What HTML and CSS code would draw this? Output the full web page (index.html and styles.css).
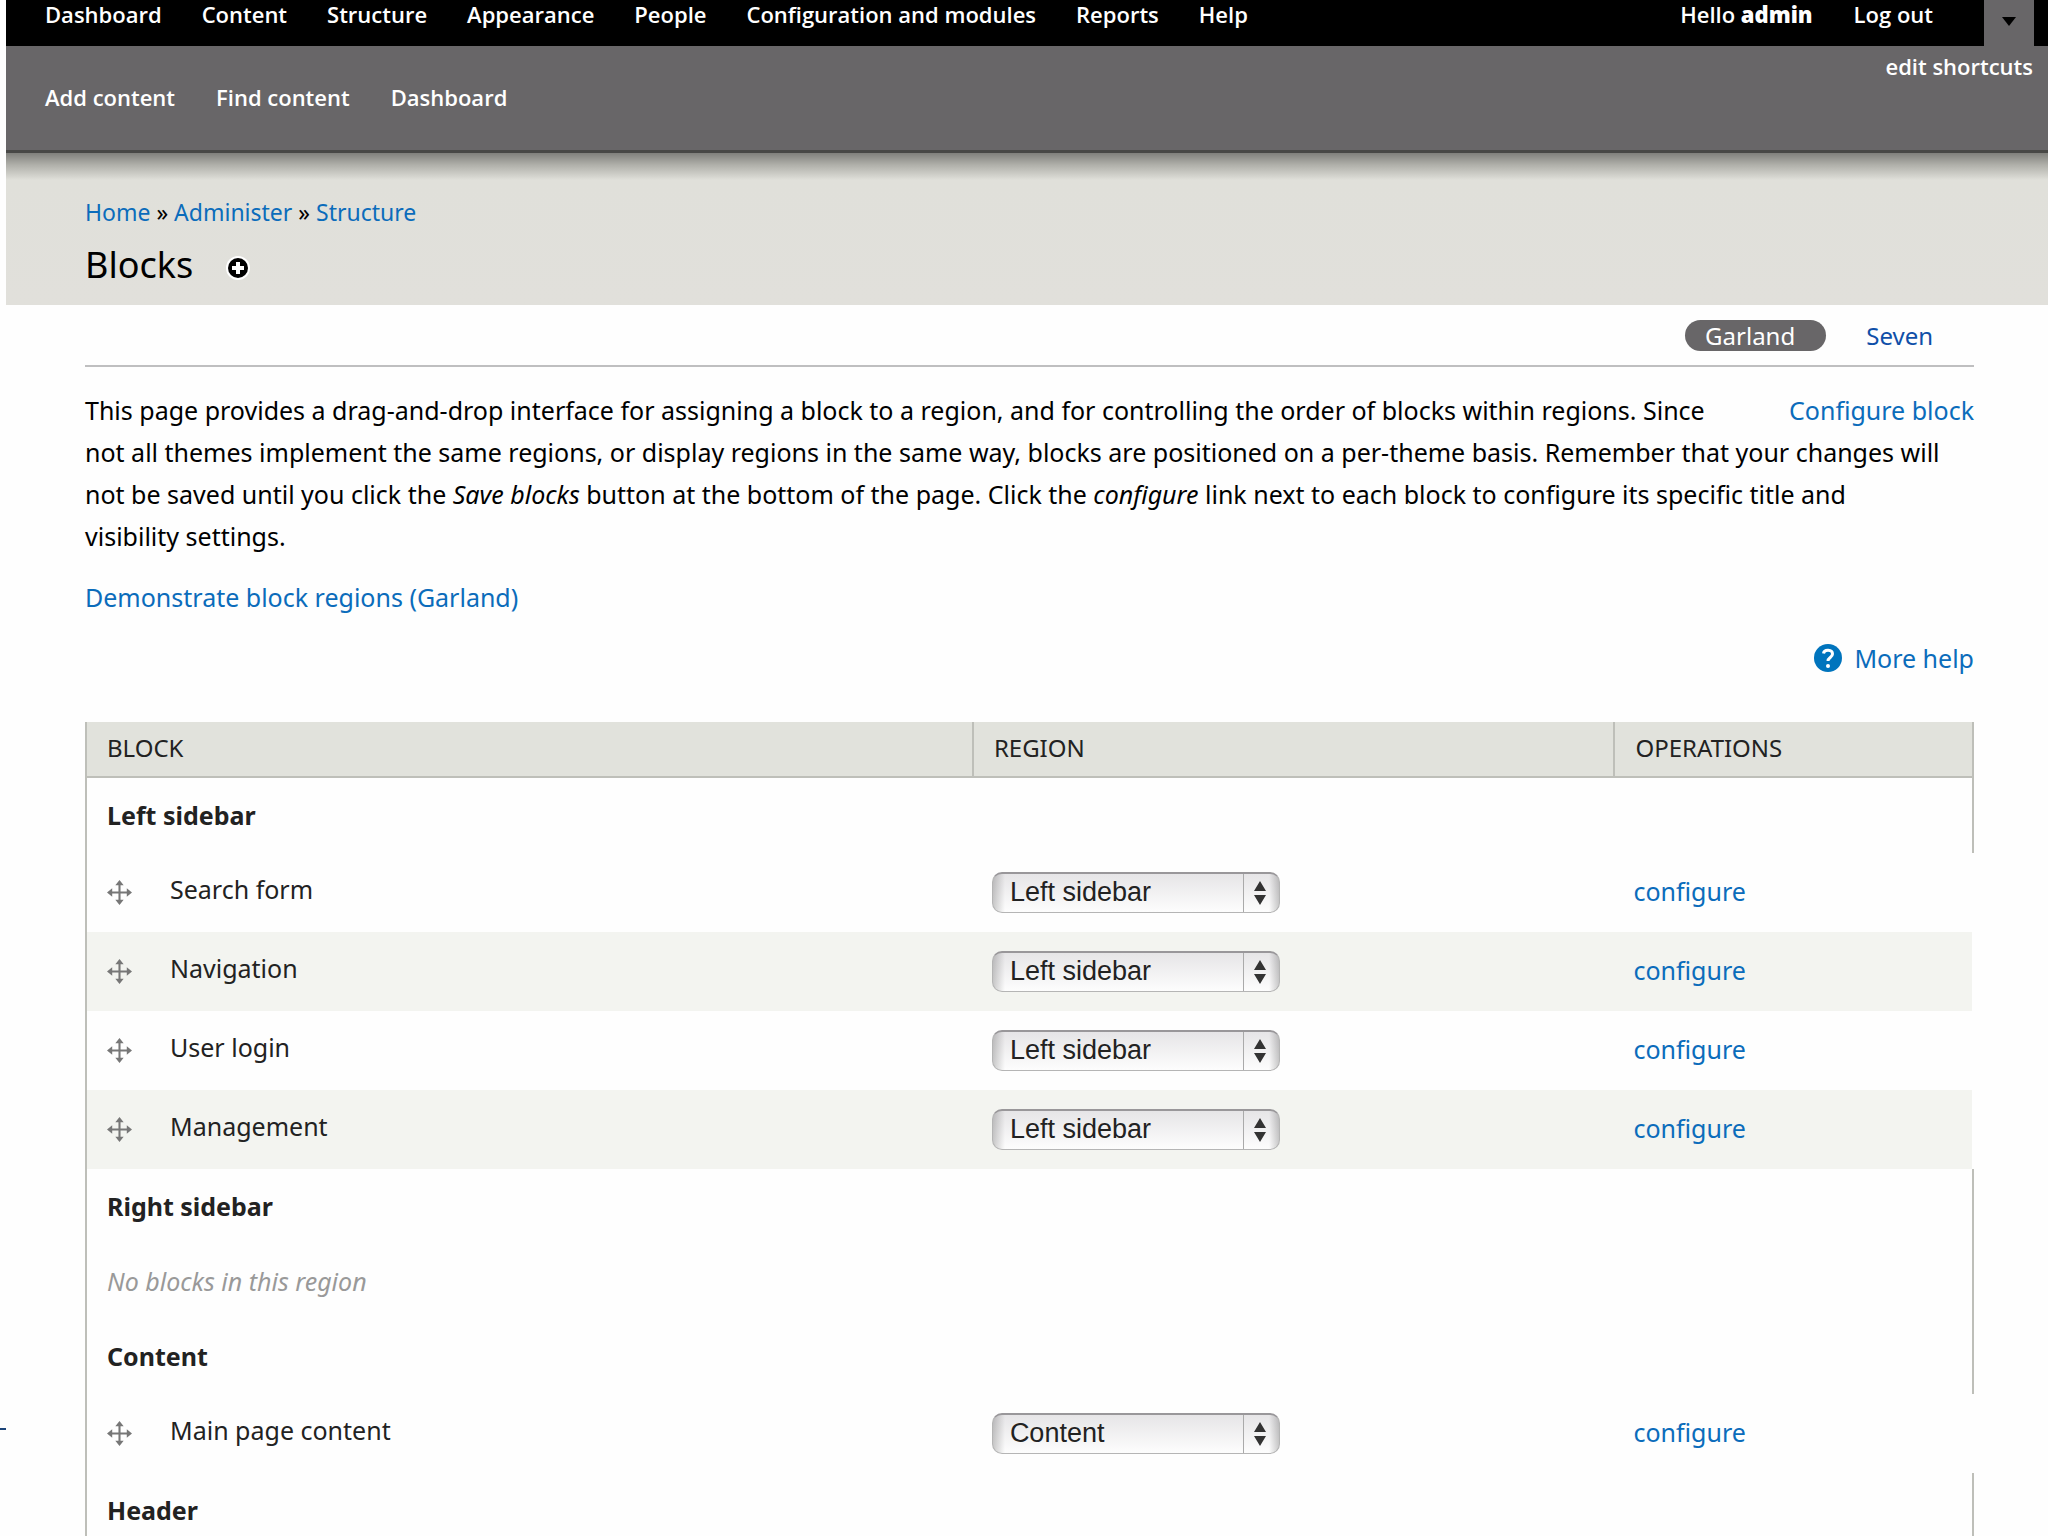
FILE: index.html
```html
<!doctype html>
<html lang="en">
  <head>
    <meta charset="UTF-8" />
    <meta name="viewport" content="width=device-width, initial-scale=1.0" />
    <title>Blocks</title>
    <link rel="stylesheet" href="styles.css">
  </head>
  <body>
    <!-- Toolbar -->
    <div class="toolbar">
      <div class="toolbar-menu">
        <nav class="menu">
          <a href="#">Dashboard</a>
          <a href="#">Content</a>
          <a href="#">Structure</a>
          <a href="#">Appearance</a>
          <a href="#">People</a>
          <a href="#">Configuration and modules</a>
          <a href="#">Reports</a>
          <a href="#">Help</a>
        </nav>
        <div class="menu user-menu">
          <a href="#">Hello <strong>admin</strong></a>
          <a href="#">Log out</a>
        </div>
        <button class="toggle" type="button" aria-label="Toggle shortcuts">
          <svg width="14" height="9" viewBox="0 0 14 9"><path d="M0 0h14L7 9z" /></svg>
        </button>
      </div>
      <div class="toolbar-drawer">
        <nav class="menu shortcuts">
          <a href="#">Add content</a>
          <a href="#">Find content</a>
          <a href="#">Dashboard</a>
        </nav>
        <a class="edit-shortcuts" href="#">edit shortcuts</a>
      </div>
    </div>

    <!-- Page title -->
    <header class="branding">
      <div class="breadcrumb">
        <a href="#">Home</a> » <a href="#">Administer</a> » <a href="#">Structure</a>
      </div>
      <div class="title-row">
        <h1>Blocks</h1>
        <button class="add-shortcut" type="button" aria-label="Add to shortcuts">
          <svg width="26" height="26" viewBox="0 0 26 26">
            <circle cx="13" cy="13" r="12" fill="#fff" />
            <circle cx="13" cy="13" r="10" fill="#000" />
            <path d="M13 7v12M7 13h12" stroke="#fff" stroke-width="4" />
          </svg>
        </button>
      </div>
    </header>

    <main class="page">
      <nav class="tabs">
        <a class="active" href="#">Garland</a>
        <a href="#">Seven</a>
      </nav>

      <div class="help">
        <a class="configure-block" href="#">Configure block</a>
        <p>
          This page provides a drag-and-drop interface for assigning a block to a region, and for controlling the order of blocks within regions. Since<br>
          not all themes implement the same regions, or display regions in the same way, blocks are positioned on a per-theme basis. Remember that your changes will<br>
          not be saved until you click the <em>Save blocks</em> button at the bottom of the page. Click the <em>configure</em> link next to each block to configure its specific title and<br>
          visibility settings.
        </p>
        <p><a href="#">Demonstrate block regions (Garland)</a></p>
        <a class="more-help" href="#">
          <svg width="28" height="28" viewBox="0 0 28 28">
            <circle cx="14" cy="14" r="14" fill="#0074bd" />
            <path d="M9.500 9.500C10 5 18.500 5 18.500 10c0 3.500-4.500 3.500-4.500 7" fill="none" stroke="#fff" stroke-width="3" />
            <circle cx="14" cy="22" r="2" fill="#fff" />
          </svg>
          More help
        </a>
      </div>

      <table class="blocks">
        <thead>
          <tr>
            <th class="col-block">Block</th>
            <th class="col-region">Region</th>
            <th>Operations</th>
          </tr>
        </thead>
        <tbody>
          <tr class="region">
            <td colspan="3">Left sidebar</td>
          </tr>
          <tr class="draggable">
            <td>
              <div class="block-name">
                <svg class="handle" viewBox="0 0 24 24"><path d="M12 3v18M3 12h18" /><path class="tip" d="M12 0l4 5H8zM12 24l4-5H8zM0 12l5-4v8zM24 12l-5-4v8z" /></svg>
                <label for="region-search">Search form</label>
              </div>
            </td>
            <td>
              <div class="select">
                <select id="region-search"><option>Left sidebar</option><option>Right sidebar</option><option>Content</option><option>Header</option></select>
                <svg viewBox="0 0 12 24"><path d="M6 0l6 10H0zM6 24l6-10H0z" /></svg>
              </div>
            </td>
            <td class="operations"><a href="#">configure</a></td>
          </tr>
          <tr class="draggable even">
            <td>
              <div class="block-name">
                <svg class="handle" viewBox="0 0 24 24"><path d="M12 3v18M3 12h18" /><path class="tip" d="M12 0l4 5H8zM12 24l4-5H8zM0 12l5-4v8zM24 12l-5-4v8z" /></svg>
                <label for="region-navigation">Navigation</label>
              </div>
            </td>
            <td>
              <div class="select">
                <select id="region-navigation"><option>Left sidebar</option><option>Right sidebar</option><option>Content</option><option>Header</option></select>
                <svg viewBox="0 0 12 24"><path d="M6 0l6 10H0zM6 24l6-10H0z" /></svg>
              </div>
            </td>
            <td class="operations"><a href="#">configure</a></td>
          </tr>
          <tr class="draggable">
            <td>
              <div class="block-name">
                <svg class="handle" viewBox="0 0 24 24"><path d="M12 3v18M3 12h18" /><path class="tip" d="M12 0l4 5H8zM12 24l4-5H8zM0 12l5-4v8zM24 12l-5-4v8z" /></svg>
                <label for="region-login">User login</label>
              </div>
            </td>
            <td>
              <div class="select">
                <select id="region-login"><option>Left sidebar</option><option>Right sidebar</option><option>Content</option><option>Header</option></select>
                <svg viewBox="0 0 12 24"><path d="M6 0l6 10H0zM6 24l6-10H0z" /></svg>
              </div>
            </td>
            <td class="operations"><a href="#">configure</a></td>
          </tr>
          <tr class="draggable even">
            <td>
              <div class="block-name">
                <svg class="handle" viewBox="0 0 24 24"><path d="M12 3v18M3 12h18" /><path class="tip" d="M12 0l4 5H8zM12 24l4-5H8zM0 12l5-4v8zM24 12l-5-4v8z" /></svg>
                <label for="region-management">Management</label>
              </div>
            </td>
            <td>
              <div class="select">
                <select id="region-management"><option>Left sidebar</option><option>Right sidebar</option><option>Content</option><option>Header</option></select>
                <svg viewBox="0 0 12 24"><path d="M6 0l6 10H0zM6 24l6-10H0z" /></svg>
              </div>
            </td>
            <td class="operations"><a href="#">configure</a></td>
          </tr>
          <tr class="region">
            <td colspan="3">Right sidebar</td>
          </tr>
          <tr class="region-empty">
            <td colspan="3">No blocks in this region</td>
          </tr>
          <tr class="region">
            <td colspan="3">Content</td>
          </tr>
          <tr class="draggable">
            <td>
              <div class="block-name">
                <svg class="handle" viewBox="0 0 24 24"><path d="M12 3v18M3 12h18" /><path class="tip" d="M12 0l4 5H8zM12 24l4-5H8zM0 12l5-4v8zM24 12l-5-4v8z" /></svg>
                <label for="region-main">Main page content</label>
              </div>
            </td>
            <td>
              <div class="select">
                <select id="region-main"><option>Left sidebar</option><option>Right sidebar</option><option selected>Content</option><option>Header</option></select>
                <svg viewBox="0 0 12 24"><path d="M6 0l6 10H0zM6 24l6-10H0z" /></svg>
              </div>
            </td>
            <td class="operations"><a href="#">configure</a></td>
          </tr>
          <tr class="region">
            <td colspan="3">Header</td>
          </tr>
        </tbody>
      </table>
    </main>
    <div class="edge-mark"></div>
  </body>
</html>
```
FILE: styles.css
```css
* {
  box-sizing: border-box;
}
body {
  position: relative;
  margin: 0;
  padding-left: 6px;
  background: #fefefe;
  color: #000;
  font-family: "Noto Sans", "Open Sans", sans-serif;
  font-size: 25px;
  line-height: 42px;
}
a {
  color: #0b6cbb;
  text-decoration: none;
}
button {
  border: 0;
  padding: 0;
  background: none;
  cursor: pointer;
}
svg {
  display: block;
}

/* Toolbar */
.toolbar {
  color: #fff;
  font-family: "Open Sans", "Noto Sans", sans-serif;
  font-size: 22px;
  font-weight: 600;
  line-height: 28px;
}
.toolbar a {
  color: #fff;
}
.toolbar-menu {
  display: flex;
  height: 46px;
  padding: 0 14px 0 39px;
  background: #000;
}
.menu {
  display: flex;
  gap: 40px;
}
.user-menu,
.shortcuts {
  gap: 41px;
}
.user-menu {
  margin-left: auto;
}
.toggle {
  display: flex;
  justify-content: center;
  width: 50px;
  margin-left: 51px;
  padding-top: 17px;
  background: #686668;
}
.toolbar-drawer {
  display: flex;
  justify-content: space-between;
  height: 107px;
  padding: 6px 15px 0 39px;
  background: #686668;
  border-bottom: 3px solid #484846;
}
.shortcuts {
  padding-top: 31px;
}

/* Page title */
.branding {
  height: 152px;
  padding: 42px 79px 0;
  background: linear-gradient(#80807c, #b0b0aa 12px, #e0e0da 27px, #e1e0db);
}
.breadcrumb {
  font-size: 23px;
  line-height: 34px;
}
.title-row {
  display: flex;
  align-items: center;
  gap: 32px;
}
h1 {
  margin: 0;
  font-size: 36px;
  font-weight: 400;
  line-height: 72px;
}
.add-shortcut {
  padding-top: 5px;
}

/* Content */
.page {
  padding: 0 74px 0 79px;
}
.tabs {
  display: flex;
  justify-content: flex-end;
  gap: 20px;
  padding: 15px 21px 14px 0;
  border-bottom: 2px solid #bfbfc0;
  font-size: 24px;
}
.tabs a {
  padding: 0 20px;
  border-radius: 16px;
  color: #0f4fa8;
  line-height: 31px;
}
.tabs a.active {
  padding-right: 31px;
  background: #686668;
  color: #fff;
}
.help {
  padding-top: 22px;
}
.help p {
  margin: 0 0 19px;
}
.configure-block {
  float: right;
}
.more-help {
  display: flex;
  align-items: center;
  justify-content: flex-end;
  gap: 12px;
}

/* Blocks table */
.blocks {
  width: 100%;
  margin-top: 43px;
  border-collapse: separate;
  border-spacing: 0;
  border-left: 2px solid #bebfb9;
  color: #222;
}
.blocks th {
  height: 56px;
  padding: 0 20px 2px;
  background: #e1e2dc;
  border-right: 2px solid #bebfb9;
  border-bottom: 2px solid #bebfb9;
  font-size: 24px;
  font-weight: 400;
  line-height: 30px;
  text-align: left;
  text-transform: uppercase;
}
.col-block {
  width: 47%;
}
.col-region {
  width: 34%;
}
.blocks td {
  height: 79px;
  padding: 0 20px;
}
.blocks td + td {
  padding-left: 18px;
}
.blocks .region td,
.blocks .region-empty td {
  height: 75px;
  padding-bottom: 2px;
  border-right: 2px solid #bebfb9;
}
.region td {
  font-weight: 700;
}
.region-empty td {
  color: #999;
  font-style: italic;
}
.even td {
  background: #f3f4f0;
}
.even td:last-child {
  border-right: 2px solid #fefefe;
}
.block-name {
  display: flex;
  align-items: center;
  gap: 38px;
}
.block-name label {
  padding-bottom: 8px;
}
.blocks .operations {
  padding-bottom: 4px;
}
.handle {
  width: 25px;
  height: 25px;
  fill: #777;
}
.handle path {
  stroke: #777;
  stroke-width: 2;
}
.handle .tip {
  stroke: none;
}
.select {
  position: relative;
  width: 288px;
}
.select select {
  display: block;
  width: 100%;
  height: 41px;
  padding: 0 50px 2px 17px;
  border: 1px solid #b5b5b5;
  border-top: 2px solid #99979a;
  border-radius: 10px;
  appearance: none;
  background:
    linear-gradient(#aaa, #aaa) right 35px top / 1px 100% no-repeat,
    linear-gradient(to right, rgba(0, 0, 0, 0.2), transparent 12px, transparent 276px, rgba(0, 0, 0, 0.2)),
    linear-gradient(#e6e5e7, #fdfdfd);
  color: #222;
  font-family: "Liberation Sans", Arial, sans-serif;
  font-size: 27px;
}
.select svg {
  position: absolute;
  top: 9px;
  right: 14px;
  width: 12px;
  height: 24px;
  fill: #333;
  pointer-events: none;
}
.edge-mark {
  position: absolute;
  top: 1428px;
  left: 0;
  width: 6px;
  height: 2px;
  background: #1c4478;
}
```
